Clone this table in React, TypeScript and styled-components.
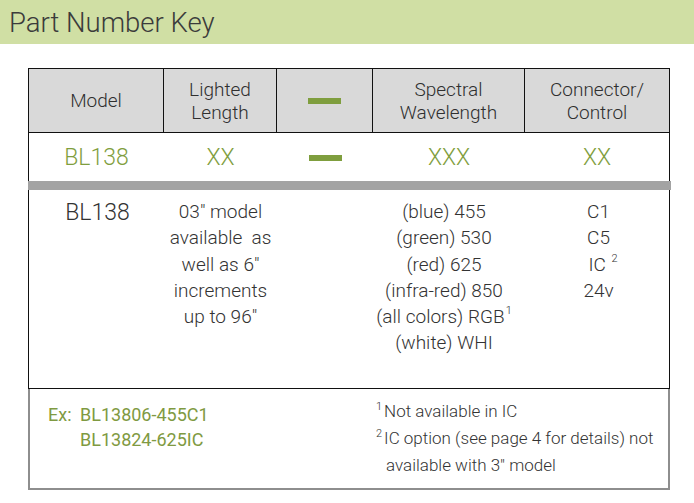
import React from "react";
import styled, { createGlobalStyle } from "styled-components";

const Global = createGlobalStyle`
  html, body { margin: 0; padding: 0; background: #fff; }
  body { font-family: Roboto, "Liberation Sans", sans-serif; color: #333; }
`;

const light = `font-family: "Roboto Light", Roboto, "Liberation Sans", sans-serif; font-weight: 300;`;

const Page = styled.div`
  width: 694px;
  height: 503px;
  overflow: hidden;
  background: #fff;
`;

const TitleBand = styled.div`
  height: 44px;
  background: #d0dfa4;
  display: flex;
  align-items: center;
  padding-left: 9px;
  font-size: 27.5px;
  ${light}
  color: #3b3b3b;
`;

const Table = styled.div`
  margin: 24px 0 0 28px;
  width: 642px;
  box-sizing: border-box;
`;

const cols = "135px 113px 96px 152px 1fr";

const HeadRow = styled.div`
  display: grid;
  grid-template-columns: ${cols};
  height: 65px;
  box-sizing: border-box;
  border: 1px solid #111;
  background: #d9d9d9;
`;

const HeadCell = styled.div<{ $last?: boolean }>`
  display: flex;
  align-items: center;
  justify-content: center;
  text-align: center;
  font-size: 19px;
  line-height: 23px;
  ${light}
  color: #2f2f2f;
  border-right: ${(p) => (p.$last ? "none" : "1px solid #111")};
`;

const Dash = styled.div`
  width: 33px;
  height: 6px;
  background: #7f9e3e;
`;

const CodeRow = styled.div`
  display: grid;
  grid-template-columns: ${cols};
  height: 48px;
  box-sizing: border-box;
  border-left: 1px solid #111;
  border-right: 1px solid #111;
  background: #fff;
`;

const CodeCell = styled.div`
  display: flex;
  align-items: center;
  justify-content: center;
  font-size: 23px;
  ${light}
  color: #7f9e3e;
  padding-top: 1px;
`;

const Bar = styled.div`
  height: 9px;
  background: #a3a3a3;
  margin-right: -1px;
`;

const BodyRow = styled.div`
  display: grid;
  grid-template-columns: ${cols};
  height: 199px;
  box-sizing: border-box;
  border-left: 1px solid #111;
  border-right: 1px solid #111;
  border-bottom: 1px solid #111;
  padding-top: 9px;
`;

const BodyCell = styled.div<{ $shift?: number }>`
  text-align: center;
  font-size: 19px;
  ${light}
  line-height: 26.3px;
  color: #333;
  padding-right: ${(p) => (p.$shift && p.$shift > 0 ? p.$shift : 0)}px;
  padding-left: ${(p) => (p.$shift && p.$shift < 0 ? -p.$shift : 0)}px;
`;

const ModelName = styled.div`
  text-align: center;
  font-size: 23px;
  ${light}
  line-height: 28px;
  color: #333;
  padding-left: 2px;
`;

const Sup = styled.sup`
  font-size: 11px;
  vertical-align: 9px;
  line-height: 0;
  margin-left: 1px;
`;

const Footer = styled.div`
  display: grid;
  grid-template-columns: 344px 1fr;
  height: 101px;
  box-sizing: border-box;
  border-left: 2px solid #8e8e8e;
  border-right: 2px solid #8e8e8e;
  border-bottom: 2px solid #8e8e8e;
  padding-top: 11px;
`;

const Examples = styled.div`
  display: grid;
  grid-template-columns: 32px auto;
  justify-content: start;
  align-content: start;
  padding: 2px 0 0 18px;
  font-family: Roboto, "Liberation Sans", sans-serif;
  font-weight: 400;
  font-size: 18px;
  line-height: 25px;
  color: #7f9a42;
`;

const Notes = styled.div`
  padding-left: 2px;
  font-size: 17px;
  ${light}
  line-height: 27px;
  color: #333;
  margin-top: -2px;
`;

const NoteLine = styled.div<{ $indent?: boolean }>`
  padding-left: ${(p) => (p.$indent ? "10px" : "0")};
  white-space: nowrap;
`;

const NoteSup = styled.sup`
  font-size: 11px;
  vertical-align: 7px;
  line-height: 0;
  margin-right: 2px;
`;

export default function App() {
  return (
    <Page>
      <Global />
      <TitleBand>Part Number Key</TitleBand>
      <Table>
        <HeadRow>
          <HeadCell>Model</HeadCell>
          <HeadCell>
            Lighted
            <br />
            Length
          </HeadCell>
          <HeadCell>
            <Dash />
          </HeadCell>
          <HeadCell>
            Spectral
            <br />
            Wavelength
          </HeadCell>
          <HeadCell $last>
            Connector/
            <br />
            Control
          </HeadCell>
        </HeadRow>
        <CodeRow>
          <CodeCell>BL138</CodeCell>
          <CodeCell>XX</CodeCell>
          <CodeCell>
            <Dash />
          </CodeCell>
          <CodeCell>XXX</CodeCell>
          <CodeCell>XX</CodeCell>
        </CodeRow>
        <Bar />
        <BodyRow>
          <ModelName>BL138</ModelName>
          <BodyCell>
            03″ model
            <br />
            available&nbsp; as
            <br />
            well as 6″
            <br />
            increments
            <br />
            up to 96″
          </BodyCell>
          <div />
          <BodyCell $shift={10}>
            (blue) 455
            <br />
            (green) 530
            <br />
            (red) 625
            <br />
            (infra-red) 850
            <br />
            (all colors) RGB<Sup>1</Sup>
            <br />
            (white) WHI
          </BodyCell>
          <BodyCell $shift={-3}>
            C1
            <br />
            C5
            <br />
            &nbsp;&nbsp;IC <Sup>2</Sup>
            <br />
            24v
          </BodyCell>
        </BodyRow>
        <Footer>
          <Examples>
            <span>Ex:</span>
            <span>BL13806-455C1</span>
            <span />
            <span>BL13824-625IC</span>
          </Examples>
          <Notes>
            <NoteLine>
              <NoteSup>1</NoteSup>Not available in IC
            </NoteLine>
            <NoteLine>
              <NoteSup>2</NoteSup>IC option (see page 4 for details) not
            </NoteLine>
            <NoteLine $indent>available with 3″ model</NoteLine>
          </Notes>
        </Footer>
      </Table>
    </Page>
  );
}
